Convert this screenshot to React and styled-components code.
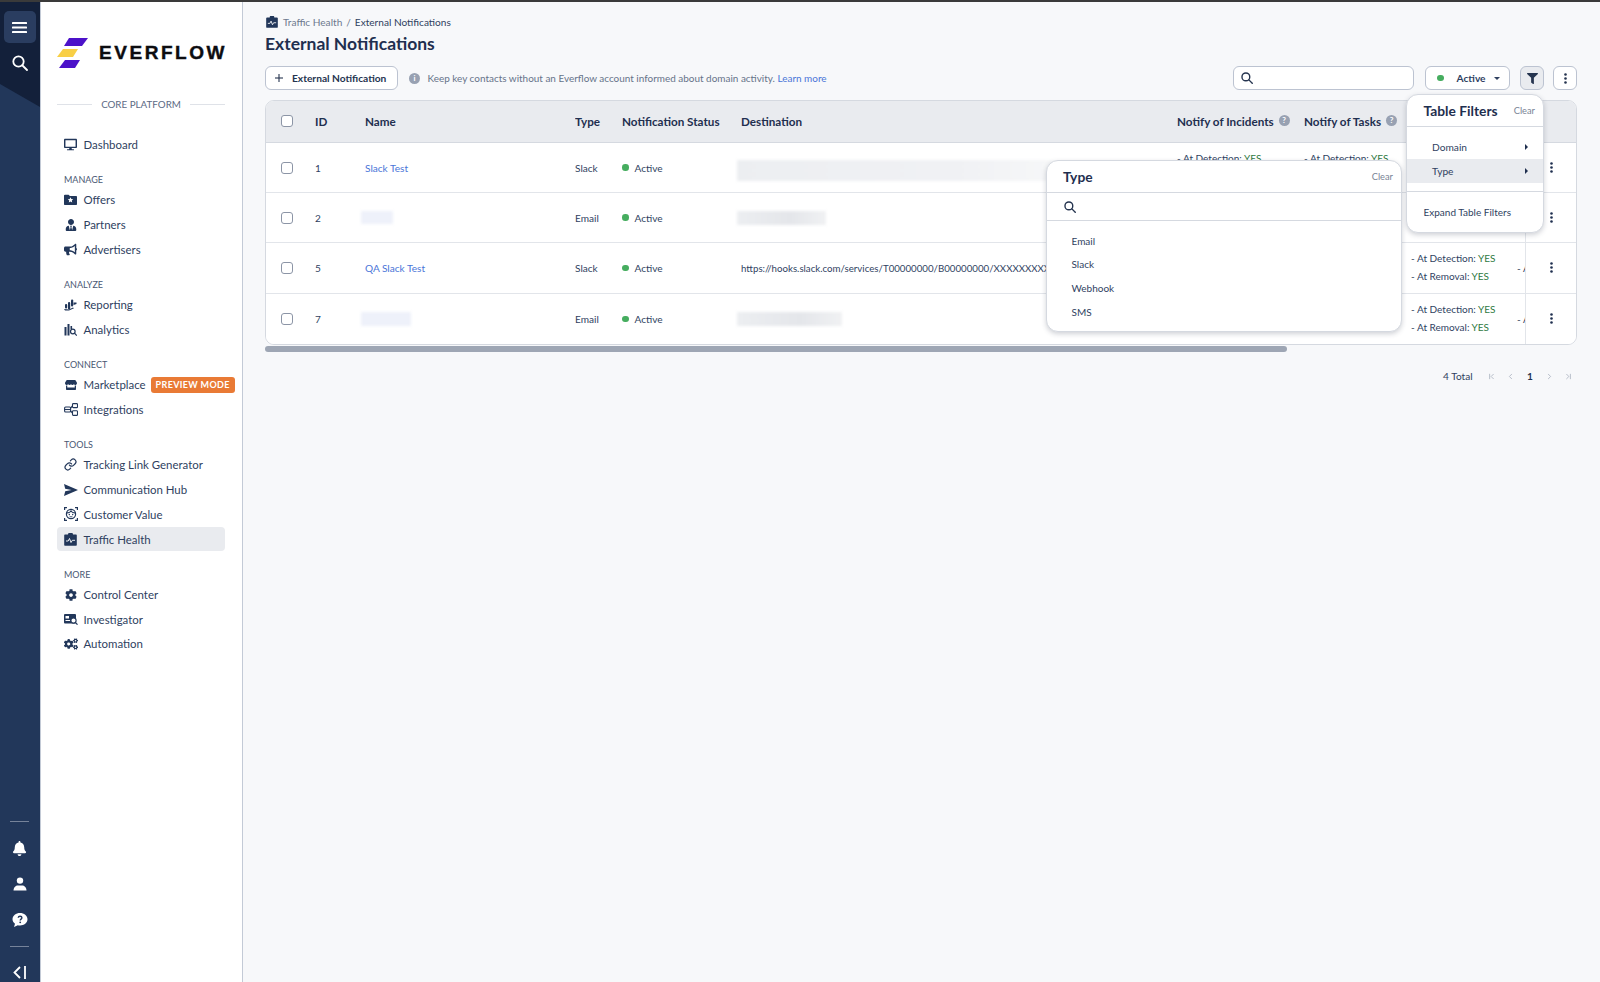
import React from 'react';
import styled, { createGlobalStyle } from 'styled-components';
import { FaBell, FaBullhorn, FaCog, FaCogs, FaDesktop, FaFilter, FaStore, FaUserTie } from 'react-icons/fa';
import { ChevronFirst, ChevronLast, ChevronLeft, ChevronRight, Link as LinkGlyph } from 'lucide-react';

const GlobalStyle = createGlobalStyle`
  html, body { margin: 0; padding: 0; height: 100%; }
  body {
    font-family: Lato, "Open Sans", "Liberation Sans", sans-serif;
    background: #f7f8fa;
    color: #2b3a5a;
    overflow: hidden;
  }
  * { box-sizing: border-box; }
`;

const navy = '#22375a';

const Page = styled.div`
  width: 1600px;
  height: 982px;
  display: flex;
  border-top: 2px solid #3a3a3a;
  overflow: hidden;
`;

/* ---------- dark rail ---------- */
const Rail = styled.aside`
  width: 40px;
  flex: none;
  background: ${navy};
  display: flex;
  flex-direction: column;
  align-items: center;
  color: #fff;
  padding-right: 1px;
`;

const RailTop = styled.div`
  width: 40px;
  height: 105px;
  margin-right: -1px;
  background: #13203a;
  clip-path: polygon(0 0, 100% 0, 100% 100%, 0 78%);
  display: flex;
  flex-direction: column;
  align-items: center;
  padding: 9px 1px 0 0;
`;

const MenuButton = styled.button`
  width: 32px;
  height: 32px;
  border: 0;
  border-radius: 5px;
  background: #2a3d60;
  color: #fff;
  display: grid;
  place-items: center;
  padding: 0;
`;

const RailSearch = styled.div`
  margin-top: 12px;
  display: grid;
  place-items: center;
`;

const RailBottom = styled.div`
  margin-top: auto;
  width: 100%;
  display: flex;
  flex-direction: column;
  align-items: center;
`;

const RailRule = styled.div`
  width: 19px;
  height: 1px;
  background: #76839a;
`;

const RailIcons = styled.div`
  margin: 8px 0;
  display: flex;
  flex-direction: column;
`;

const RailIcon = styled.div`
  height: 36px;
  display: grid;
  place-items: center;
`;

const CollapseSlot = styled.div`
  height: 20px;
  margin-top: 15px;
  display: grid;
  place-items: center;
`;

/* ---------- nav ---------- */
const Nav = styled.nav`
  width: 203px;
  flex: none;
  background: #fff;
  border-left: 1px solid #c3cad6;
  border-right: 1px solid #c3cad6;
  padding: 36px 0 0 16px;
`;

const LogoRow = styled.div`
  display: flex;
  align-items: center;
  gap: 11px;
  height: 30px;
`;

const LogoText = styled.div`
  font-family: "Liberation Sans", sans-serif;
  font-weight: 700;
  font-size: 19px;
  letter-spacing: 2.55px;
  color: #0c0c10;
  -webkit-text-stroke: 0.4px #0c0c10;
`;

const Platform = styled.div`
  width: 168px;
  height: 12px;
  margin-top: 30px;
  display: flex;
  align-items: center;
  gap: 9px;
  font-size: 9.8px;
  color: #5c6a84;
  white-space: nowrap;
  &::before, &::after {
    content: '';
    flex: 1;
    height: 1px;
    background: #dfe2e8;
  }
`;

const NavList = styled.div`
  margin-top: 22px;
  width: 168px;
`;

const NavSection = styled.div`
  font-size: 9px;
  line-height: 12px;
  color: #4a5873;
  padding-left: 7px;
  margin-top: 17.65px;
  margin-bottom: 1.15px;
`;

const NavItem = styled.div`
  height: 24.7px;
  width: 168px;
  display: flex;
  align-items: center;
  padding-left: 7px;
  border-radius: 4px;
  font-size: 11.45px;
  color: #2f3f5f;
  white-space: nowrap;
  background: ${p => (p.$active ? '#e9ebef' : 'transparent')};
`;

const NavGlyph = styled.span`
  width: 14px;
  height: 14px;
  margin-right: 6px;
  margin-left: -0.5px;
  color: ${navy};
  display: grid;
  place-items: center;
  flex: none;
`;

const PreviewBadge = styled.span`
  margin-left: 5px;
  background: #e97a35;
  color: #fff;
  font-size: 9px;
  font-weight: 700;
  letter-spacing: 0.35px;
  line-height: 16px;
  padding: 0 5px;
  border-radius: 3px;
  flex: none;
`;

/* ---------- main ---------- */
const Main = styled.main`
  position: relative;
  flex: 1;
  min-width: 0;
  padding: 14px 23px 0 22px;
`;

const Breadcrumb = styled.div`
  display: flex;
  align-items: center;
  height: 12px;
  font-size: 10.1px;
  color: #6d788e;
  b { font-weight: 400; color: #2f3f5f; }
  i { font-style: normal; margin: 0 4px; }
`;

const CrumbGlyph = styled(NavGlyph)`
  margin: 0 4px 0 0;
`;

const Title = styled.h1`
  margin: 5px 0 0;
  font-size: 17.5px;
  line-height: 22px;
  font-weight: 700;
  color: #1f2f4f;
`;

const Toolbar = styled.div`
  margin-top: 11px;
  height: 24px;
  display: flex;
  align-items: center;
`;

const AddButton = styled.button`
  width: 133px;
  height: 24px;
  background: #fff;
  border: 1px solid #bcc3d1;
  border-radius: 6px;
  font: 700 10.2px Lato, sans-serif;
  color: #25344f;
  display: flex;
  align-items: center;
  padding: 0 0 0 9px;
  gap: 9px;
`;

const InfoText = styled.div`
  margin-left: 11px;
  display: flex;
  align-items: center;
  gap: 7.5px;
  font-size: 9.95px;
  color: #667389;
  a { color: #4a75d8; text-decoration: none; }
`;

const InfoDot = styled.span`
  width: 11px;
  height: 11px;
  border-radius: 50%;
  background: #98a1b2;
  color: #fff;
  font-size: 8px;
  font-weight: 700;
  line-height: 11px;
  text-align: center;
`;

const ToolbarRight = styled.div`
  margin-left: auto;
  display: flex;
  align-items: center;
`;

const SearchBox = styled.div`
  width: 181px;
  height: 24px;
  background: #fff;
  border: 1px solid #bcc3d1;
  border-radius: 6px;
  display: flex;
  align-items: center;
  padding-left: 7px;
  color: #25344f;
`;

const StatusSelect = styled.div`
  width: 85px;
  height: 24px;
  margin-left: 11px;
  background: #fff;
  border: 1px solid #bcc3d1;
  border-radius: 6px;
  display: flex;
  align-items: center;
  padding-left: 8px;
  font-size: 10.2px;
  font-weight: 700;
  color: #2f3f5f;
`;

const Caret = styled.span`
  margin-left: 8px;
  width: 0;
  height: 0;
  border-left: 3px solid transparent;
  border-right: 3px solid transparent;
  border-top: 3px solid #2f3f5f;
`;

const SquareButton = styled.button`
  width: 24px;
  height: 24px;
  margin-left: ${p => p.$gap}px;
  padding: 0;
  background: ${p => (p.$on ? '#e9ebef' : '#fff')};
  border: 1px solid #bcc3d1;
  border-radius: 6px;
  color: #25344f;
  display: grid;
  place-items: center;
`;

/* ---------- table ---------- */
const TableCard = styled.div`
  margin-top: 10px;
  width: 1312px;
  background: #fff;
  border: 1px solid #d5d9e0;
  border-radius: 9px;
  overflow: hidden;
`;

const columns = '49px 50px 210px 47px 119px 436px 127px 107px 106px 8px 51px';

const Row = styled.div`
  display: grid;
  grid-template-columns: ${columns};
  height: ${p => p.$h}px;
  align-items: center;
  font-size: 10.1px;
  color: #2f3f5f;
  background: #fff;
  border-bottom: ${p => (p.$last ? '0' : '1px solid #e2e5ea')};
`;

const HeadRow = styled(Row)`
  font-size: 11.7px;
  font-weight: 700;
  color: #1f2f4f;
  background: #e9ebef;
  border-bottom-color: #d5d9e0;
  padding-bottom: 2px;
`;

const Cell = styled.div`
  min-width: 0;
  white-space: nowrap;
  overflow: ${p => (p.$open ? 'visible' : 'hidden')};
  height: 100%;
  display: flex;
  align-items: center;
  gap: 5px;
`;

const UrlCell = styled(Cell)`
  font-size: 9.7px;
`;

const CheckCell = styled(Cell)`
  padding-left: 15px;
`;

const StickyCell = styled(Cell)`
  justify-content: center;
  border-left: ${p => (p.$head ? '0' : '1px solid #e2e5ea')};
  color: #1f2f4f;
`;

const Check = styled.span`
  width: 12px;
  height: 12px;
  background: #fff;
  border: 1.3px solid #8c95a6;
  border-radius: 3px;
`;

const HelpDot = styled.span`
  width: 11px;
  height: 11px;
  border-radius: 50%;
  background: #98a1b2;
  color: #fff;
  font-size: 8px;
  font-weight: 700;
  line-height: 11px;
  text-align: center;
`;

const NameLink = styled.a`
  color: #4a75d8;
`;

const Status = styled.span`
  display: flex;
  align-items: center;
  gap: 6px;
  &::before {
    content: '';
    width: 6.5px;
    height: 6.5px;
    border-radius: 50%;
    background: #46ad5f;
  }
`;

const SelectStatus = styled(Status)`
  gap: 13px;
  margin-left: 3px;
`;

const Blur = styled.span`
  display: block;
  width: ${p => p.$w}px;
  height: ${p => p.$h}px;
  margin-left: -4px;
  margin-top: ${p => p.$top || 0}px;
  background: ${p => p.$c};
  filter: blur(1.5px);
`;

const Lines = styled.div`
  display: flex;
  flex-direction: column;
  gap: 3px;
  line-height: 15px;
  font-size: 10px;
  em { font-style: normal; color: #2f7a3f; }
`;

const Scrollbar = styled.div`
  margin-top: 1px;
  width: 1022px;
  height: 6px;
  border-radius: 3px;
  background: #9ea6b4;
`;

const Pager = styled.div`
  margin-top: 18px;
  height: 13px;
  width: 1313.5px;
  display: flex;
  justify-content: flex-end;
  align-items: center;
  font-size: 10.1px;
  color: #2f3f5f;
`;

const PagerTotal = styled.span`
  margin-right: 9px;
`;

const PagerArrow = styled.span`
  width: 19.4px;
  display: grid;
  place-items: center;
  color: #a3abb9;
`;

const PagerPage = styled.b`
  width: 19.4px;
  text-align: center;
  color: #1f2f4f;
`;

/* ---------- popovers ---------- */
const Popover = styled.div`
  position: absolute;
  background: #fff;
  border: 1px solid #d5d9e0;
  border-radius: 12px;
  box-shadow: 0 2px 5px rgba(40, 50, 75, 0.22);
  overflow: hidden;
`;

const FiltersPopover = styled(Popover)`
  left: 1163px;
  top: 92px;
  width: 138px;
  height: 139px;
  z-index: 3;
`;

const TypePopover = styled(Popover)`
  left: 803px;
  top: 158px;
  width: 356px;
  height: 172px;
  z-index: 2;
`;

const PopHead = styled.div`
  height: ${p => p.$h}px;
  display: flex;
  align-items: center;
  justify-content: space-between;
  padding: 0 8px 0 ${p => p.$pad}px;
  border-bottom: 1px solid #d5d9e0;
`;

const PopTitle = styled.span`
  font-size: 13.8px;
  font-weight: 700;
  color: #1f2f4f;
`;

const ClearLink = styled.span`
  font-size: 9.3px;
  color: #7a8496;
`;

const PopSearch = styled.div`
  height: 28px;
  display: flex;
  align-items: center;
  padding-left: 17px;
  border-bottom: 1px solid #d5d9e0;
  color: #25344f;
`;

const PopList = styled.div`
  padding: 8px 0 0 24.5px;
`;

const PopOption = styled.div`
  height: 23.6px;
  display: flex;
  align-items: center;
  font-size: 10px;
  color: #2f3f5f;
`;

const FilterGroup = styled.div`
  padding: 8px 0;
  border-bottom: 1px solid #d5d9e0;
`;

const FilterOption = styled.div`
  height: 24px;
  display: flex;
  align-items: center;
  justify-content: space-between;
  padding: 0 15px 0 25px;
  font-size: 10.2px;
  color: #2f3f5f;
  background: ${p => (p.$on ? '#e9ebef' : 'transparent')};
`;

const SideCaret = styled.span`
  width: 0;
  height: 0;
  border-top: 3px solid transparent;
  border-bottom: 3px solid transparent;
  border-left: 3px solid #1f2f4f;
`;

const ExpandRow = styled.div`
  height: 40px;
  display: flex;
  align-items: center;
  padding-left: 16.5px;
  font-size: 10px;
  color: #2f3f5f;
`;

/* ---------- drawn icons ---------- */
const LogoMark = () => (
  <svg width="31" height="30" viewBox="0 0 31 30">
    <polygon points="12,0 31,0 25,8 7,8" fill="#4c12c9" />
    <polygon points="6,11 21,11 16,19 0,19" fill="#f8cf45" />
    <polygon points="8,22 23,22 18,30 2,30" fill="#4c12c9" />
  </svg>
);

const Burger = () => (
  <svg width="15" height="11" viewBox="0 0 15 11" fill="#fff">
    <rect width="15" height="2" rx="0.6" />
    <rect y="4.5" width="15" height="2" rx="0.6" />
    <rect y="9" width="15" height="2" rx="0.6" />
  </svg>
);

const RoundSearch = ({ size = 12, w = 1.4 }) => (
  <svg width={size} height={size} viewBox="0 0 16 16" fill="none" stroke="currentColor" strokeWidth={w * 16 / size} strokeLinecap="round">
    <circle cx="6.5" cy="6.5" r="5.2" />
    <line x1="10.5" y1="10.5" x2="15" y2="15" />
  </svg>
);

const Plus = () => (
  <svg width="8" height="8" viewBox="0 0 8 8" stroke="#25344f" strokeWidth="1.1">
    <line x1="4" y1="0" x2="4" y2="8" />
    <line x1="0" y1="4" x2="8" y2="4" />
  </svg>
);

const Help = () => (
  <svg width="16" height="16" viewBox="0 0 16 16">
    <path d="M8 1c4 0 7.5 2.6 7.5 6.3S12 13.5 8 13.5c-.8 0-1.5-.1-2.2-.3L2 15l1-3.2C1.5 10.7.5 9.1.5 7.3.5 3.6 4 1 8 1z" fill="#fff" />
    <path d="M6.2 5.8c.1-1 .9-1.5 1.9-1.5s1.8.6 1.8 1.5c0 1.3-1.7 1.3-1.7 2.6" fill="none" stroke={navy} strokeWidth="1.4" />
    <circle cx="8.2" cy="10.3" r=".9" fill={navy} />
  </svg>
);

const UserBust = () => (
  <svg width="14" height="14" viewBox="0 0 14 14" fill="#fff">
    <circle cx="7" cy="3.6" r="3.2" />
    <path d="M0.5 13.5c0-3 2.2-5 4.5-5h4c2.3 0 4.5 2 4.5 5z" />
  </svg>
);

const Collapse = () => (
  <svg width="13" height="13" viewBox="0 0 13 13" fill="none" stroke="#fff" strokeWidth="1.8">
    <polyline points="7,1 1.5,6.5 7,12" />
    <line x1="12" y1="0" x2="12" y2="13" />
  </svg>
);

const FolderStar = () => (
  <svg width="13" height="13" viewBox="0 0 13 13">
    <path d="M0 2.5C0 2 .4 1.7 1 1.7h3.6l1.3 1.4H12c.6 0 1 .4 1 1v6.8c0 .6-.4 1-1 1H1c-.6 0-1-.4-1-1z" fill="currentColor" />
    <polygon points="6.5,4.3 7.3,6.1 9.2,6.3 7.8,7.5 8.2,9.4 6.5,8.4 4.8,9.4 5.2,7.5 3.8,6.3 5.7,6.1" fill="#fff" />
  </svg>
);

const ReportingIcon = () => (
  <svg width="13" height="13" viewBox="0 0 13 13" fill="currentColor">
    <rect x="1" y="6" width="2.2" height="4.5" rx="1" />
    <rect x="4" y="4" width="2.2" height="7.5" rx="1" />
    <rect x="7" y="1.5" width="2.2" height="7" rx="1" />
    <path d="M9.5 4.5h3V6l-3 1zM0 11l5 .5 4-2 1 .8-5 2.2H1z" />
  </svg>
);

const AnalyticsIcon = () => (
  <svg width="13" height="13" viewBox="0 0 13 13" fill="currentColor">
    <rect x="0.5" y="4" width="2" height="8.5" />
    <rect x="3.5" y="1" width="2" height="11.5" />
    <rect x="6.5" y="3" width="1.6" height="3" />
    <circle cx="8.8" cy="8.5" r="2.3" fill="none" stroke="currentColor" strokeWidth="1.2" />
    <line x1="10.5" y1="10.2" x2="12.8" y2="12.6" stroke="currentColor" strokeWidth="1.2" />
  </svg>
);

const IntegrationsIcon = () => (
  <svg width="14" height="13" viewBox="0 0 14 13" fill="none" stroke="currentColor" strokeWidth="1.1">
    <rect x="0.6" y="4" width="6" height="5" rx="1" />
    <line x1="0.6" y1="6.5" x2="6.6" y2="6.5" />
    <rect x="8.5" y="0.6" width="5" height="4" rx="0.8" />
    <rect x="8.5" y="7.8" width="5" height="4.6" rx="0.8" />
    <path d="M6.6 5L8.5 3M6.6 8L8.5 10" />
  </svg>
);

const SendIcon = () => (
  <svg width="14" height="12" viewBox="0 0 14 12" fill="currentColor">
    <path d="M0 0l14 6-14 6 1.2-4.7L7.5 6 1.2 4.7z" />
  </svg>
);

const FaceIcon = () => (
  <svg width="14" height="14" viewBox="0 0 14 14" fill="none" stroke="currentColor" strokeWidth="1.2">
    <path d="M.6 3V.6H3M11 .6h2.4V3M.6 11v2.4H3M11 13.4h2.4V11" />
    <circle cx="7" cy="7" r="4.6" />
    <path d="M2.8 5.800c2 .2 3.4-.5 4.2-1.800.8 1.300 2.200 2 4.200 1.800" />
    <circle cx="5.3" cy="7.5" r=".7" fill="currentColor" stroke="none" />
    <circle cx="8.7" cy="7.5" r=".7" fill="currentColor" stroke="none" />
    <path d="M5.6 9.3c.8.6 2 .6 2.8 0" strokeWidth="0.9" />
  </svg>
);

const HealthIcon = ({ size = 13 }) => (
  <svg width={size} height={size} viewBox="0 0 13 13">
    <path d="M1.2 1.5H4a2.5 2 0 0 1 5 0h2.8c.6 0 1 .4 1 1v9.3c0 .6-.4 1-1 1H1.2c-.6 0-1-.4-1-1V2.5c0-.6.4-1 1-1z" fill="currentColor" />
    <polyline points="2,8 4.2,8 5.5,5.5 7,9.5 8.3,7.3 11,7.3" fill="none" stroke="#fff" strokeWidth="0.9" />
  </svg>
);

const InvestigatorIcon = () => (
  <svg width="14" height="12" viewBox="0 0 14 12">
    <rect x="0" y="1" width="12" height="9.5" rx="1" fill="currentColor" />
    <rect x="1.5" y="3" width="3.5" height="2.5" fill="#fff" />
    <rect x="1.5" y="7" width="4.5" height="1" fill="#fff" />
    <circle cx="9.5" cy="7.5" r="2.6" fill="#fff" stroke="currentColor" strokeWidth="1.1" />
    <line x1="11.3" y1="9.4" x2="13.5" y2="11.6" stroke="currentColor" strokeWidth="1.3" />
  </svg>
);

const Kebab = () => (
  <svg width="3" height="11" viewBox="0 0 3 11" fill="currentColor">
    <circle cx="1.5" cy="1.5" r="1.3" />
    <circle cx="1.5" cy="5.5" r="1.3" />
    <circle cx="1.5" cy="9.5" r="1.3" />
  </svg>
);

const navGroups = [
  { items: [{ label: 'Dashboard', icon: <FaDesktop size={13} /> }] },
  {
    title: 'MANAGE',
    items: [
      { label: 'Offers', icon: <FolderStar /> },
      { label: 'Partners', icon: <FaUserTie size={12} /> },
      { label: 'Advertisers', icon: <FaBullhorn size={13} /> },
    ],
  },
  {
    title: 'ANALYZE',
    items: [
      { label: 'Reporting', icon: <ReportingIcon /> },
      { label: 'Analytics', icon: <AnalyticsIcon /> },
    ],
  },
  {
    title: 'CONNECT',
    items: [
      { label: 'Marketplace', icon: <FaStore size={12} />, badge: 'PREVIEW MODE' },
      { label: 'Integrations', icon: <IntegrationsIcon /> },
    ],
  },
  {
    title: 'TOOLS',
    items: [
      { label: 'Tracking Link Generator', icon: <LinkGlyph size={13} strokeWidth={2.2} /> },
      { label: 'Communication Hub', icon: <SendIcon /> },
      { label: 'Customer Value', icon: <FaceIcon /> },
      { label: 'Traffic Health', icon: <HealthIcon />, active: true },
    ],
  },
  {
    title: 'MORE',
    items: [
      { label: 'Control Center', icon: <FaCog size={12} /> },
      { label: 'Investigator', icon: <InvestigatorIcon /> },
      { label: 'Automation', icon: <FaCogs size={14} /> },
    ],
  },
];

const rows = [
  { id: 1, h: 50, name: 'Slack Test', type: 'Slack', dest: { w: 316, h: 21, top: 5, c: 'linear-gradient(90deg, #eceef1, #f0f1f4 70%, #f6f7f8)' } },
  { id: 2, h: 50.33, nameBlur: { w: 32, h: 13 }, type: 'Email', dest: { w: 89, h: 14, c: 'linear-gradient(90deg, #eceef1, #e4e6ea 60%, #f0f1f3)' } },
  { id: 5, h: 50.33, name: 'QA Slack Test', type: 'Slack', url: 'https://hooks.slack.com/services/T00000000/B00000000/XXXXXXXXXXXXXXXXXXXXXXXX' },
  { id: 7, h: 50.33, nameBlur: { w: 50, h: 14 }, type: 'Email', dest: { w: 105, h: 14, c: 'linear-gradient(90deg, #eceef1, #e4e6ea 60%, #f0f1f3)' }, last: true },
];

const YesLines = () => (
  <Lines>
    <span>- At Detection: <em>YES</em></span>
    <span>- At Removal: <em>YES</em></span>
  </Lines>
);

export default function App() {
  return (
    <>
      <GlobalStyle />
      <Page>
        <Rail>
          <RailTop>
            <MenuButton><Burger /></MenuButton>
            <RailSearch><RoundSearch size={16} w={1.8} /></RailSearch>
          </RailTop>
          <RailBottom>
            <RailRule />
            <RailIcons>
              <RailIcon><FaBell size={15} /></RailIcon>
              <RailIcon><UserBust /></RailIcon>
              <RailIcon><Help /></RailIcon>
            </RailIcons>
            <RailRule />
            <CollapseSlot><Collapse /></CollapseSlot>
          </RailBottom>
        </Rail>

        <Nav>
          <LogoRow>
            <LogoMark />
            <LogoText>EVERFLOW</LogoText>
          </LogoRow>
          <Platform>CORE PLATFORM</Platform>
          <NavList>
            {navGroups.map((group, i) => (
              <div key={i}>
                {group.title && <NavSection>{group.title}</NavSection>}
                {group.items.map(item => (
                  <NavItem key={item.label} $active={item.active}>
                    <NavGlyph>{item.icon}</NavGlyph>
                    {item.label}
                    {item.badge && <PreviewBadge>{item.badge}</PreviewBadge>}
                  </NavItem>
                ))}
              </div>
            ))}
          </NavList>
        </Nav>

        <Main>
          <Breadcrumb>
            <CrumbGlyph><HealthIcon size={12} /></CrumbGlyph>
            Traffic Health <i>/</i> <b>External Notifications</b>
          </Breadcrumb>
          <Title>External Notifications</Title>

          <Toolbar>
            <AddButton><Plus /> External Notification</AddButton>
            <InfoText>
              <InfoDot>i</InfoDot>
              <span>Keep key contacts without an Everflow account informed about domain activity. <a href="#learn">Learn more</a></span>
            </InfoText>
            <ToolbarRight>
              <SearchBox><RoundSearch /></SearchBox>
              <StatusSelect>
                <SelectStatus>Active</SelectStatus>
                <Caret />
              </StatusSelect>
              <SquareButton $gap={10} $on><FaFilter size={11} /></SquareButton>
              <SquareButton $gap={9}><Kebab /></SquareButton>
            </ToolbarRight>
          </Toolbar>

          <TableCard>
            <HeadRow $h={42}>
              <CheckCell><Check /></CheckCell>
              <Cell>ID</Cell>
              <Cell>Name</Cell>
              <Cell>Type</Cell>
              <Cell>Notification Status</Cell>
              <Cell>Destination</Cell>
              <Cell>Notify of Incidents <HelpDot>?</HelpDot></Cell>
              <Cell>Notify of Tasks <HelpDot>?</HelpDot></Cell>
              <Cell />
              <Cell />
              <StickyCell $head />
            </HeadRow>
            {rows.map(row => (
              <Row key={row.id} $h={row.h} $last={row.last}>
                <CheckCell><Check /></CheckCell>
                <Cell>{row.id}</Cell>
                <Cell $open>
                  {row.name
                    ? <NameLink>{row.name}</NameLink>
                    : <Blur $w={row.nameBlur.w} $h={row.nameBlur.h} $c="#eef1fa" />}
                </Cell>
                <Cell>{row.type}</Cell>
                <Cell><Status>Active</Status></Cell>
                <UrlCell $open={!row.url}>
                  {row.url ? row.url : <Blur $w={row.dest.w} $h={row.dest.h} $top={row.dest.top} $c={row.dest.c} />}
                </UrlCell>
                <Cell><YesLines /></Cell>
                <Cell><YesLines /></Cell>
                <Cell><YesLines /></Cell>
                <Cell>- At</Cell>
                <StickyCell><Kebab /></StickyCell>
              </Row>
            ))}
          </TableCard>
          <Scrollbar />
          <Pager>
            <PagerTotal>4 Total</PagerTotal>
            <PagerArrow><ChevronFirst size={9} /></PagerArrow>
            <PagerArrow><ChevronLeft size={9} /></PagerArrow>
            <PagerPage>1</PagerPage>
            <PagerArrow><ChevronRight size={9} /></PagerArrow>
            <PagerArrow><ChevronLast size={9} /></PagerArrow>
          </Pager>

          <TypePopover>
            <PopHead $h={32} $pad={16}>
              <PopTitle>Type</PopTitle>
              <ClearLink>Clear</ClearLink>
            </PopHead>
            <PopSearch><RoundSearch /></PopSearch>
            <PopList>
              {['Email', 'Slack', 'Webhook', 'SMS'].map(option => (
                <PopOption key={option}>{option}</PopOption>
              ))}
            </PopList>
          </TypePopover>

          <FiltersPopover>
            <PopHead $h={32} $pad={16.5}>
              <PopTitle>Table Filters</PopTitle>
              <ClearLink>Clear</ClearLink>
            </PopHead>
            <FilterGroup>
              <FilterOption>Domain <SideCaret /></FilterOption>
              <FilterOption $on>Type <SideCaret /></FilterOption>
            </FilterGroup>
            <ExpandRow>Expand Table Filters</ExpandRow>
          </FiltersPopover>
        </Main>
      </Page>
    </>
  );
}
